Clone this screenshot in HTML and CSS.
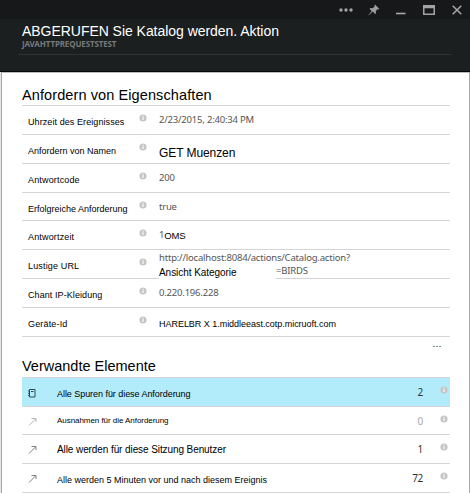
FILE: index.html
```html
<!DOCTYPE html>
<html lang="de">
<head>
<meta charset="utf-8">
<title>ABGERUFEN Sie Katalog werden. Aktion</title>
<link rel="stylesheet" href="styles.css">
</head>
<body>
<svg class="defs" width="0" height="0">
  <symbol id="info" viewBox="0 0 8 8"><circle cx="4" cy="4" r="3.6" fill="#c6c6c6"/><path d="M4 3.300v2.700M4 1.700v1" stroke="#fff" stroke-width="1.100" fill="none"/></symbol>
  <symbol id="arrow" viewBox="0 0 10 10"><path d="M1 8.500L7.500 2M3.500 1.500h4.500v3.500" fill="none" stroke="currentColor" stroke-width="1"/></symbol>
</svg>
<div class="blade">
  <header class="head">
    <div class="bar">
      <svg width="14" height="4" viewBox="0 0 14 4" class="dots"><g fill="#a2a3a4"><circle cx="2" cy="2" r="1.7"/><circle cx="7" cy="2" r="1.7"/><circle cx="12" cy="2" r="1.7"/></g></svg>
      <svg width="12" height="12" viewBox="0 0 12 12" class="pin"><path d="M7 .6L11.4 5l-1 .5-.9-.2-1.7 1.8.2 2.2-.9.7-2.3-2.4L.8 11.2l-.3-.2 3.2-4L1.6 4.900l.8-.8 2.300.2L6.600 2.500l-.2-1z" fill="#9c9d9e"/></svg>
      <svg width="10" height="12" viewBox="0 0 10 12" class="min"><path d="M0 10.500h9.500" stroke="#a8a9aa" stroke-width="1.600"/></svg>
      <svg width="12" height="10" viewBox="0 0 12 10" class="max"><path d="M0 0h12v10H0zM1.500 3.300v5.200h9V3.300z" fill="#a2a3a4" fill-rule="evenodd"/></svg>
      <svg width="10" height="10" viewBox="0 0 10 10" class="close"><path d="M.7.7l8.600 8.600M9.300.7L.7 9.300" stroke="#a6a7a8" stroke-width="1.500"/></svg>
    </div>
    <div class="titles">
      <h1>ABGERUFEN Sie Katalog werden. Aktion</h1>
      <p>JAVAHTTPREQUESTSTEST</p>
    </div>
  </header>
  <main>
    <h2 class="props-title">Anfordern von Eigenschaften</h2>
    <div class="rows">
      <div class="row"><span class="label l-time">Uhrzeit des Ereignisses</span><svg class="info"><use href="#info"/></svg><span class="value date">2/23/2015, 2:40:34 PM</span></div>
      <div class="row"><span class="label">Anfordern von Namen</span><svg class="info"><use href="#info"/></svg><span class="value name">GET Muenzen</span></div>
      <div class="row"><span class="label l-wide">Antwortcode</span><svg class="info"><use href="#info"/></svg><span class="value code">200</span></div>
      <div class="row"><span class="label">Erfolgreiche Anforderung</span><svg class="info"><use href="#info"/></svg><span class="value">true</span></div>
      <div class="row"><span class="label l-wide">Antwortzeit</span><svg class="info"><use href="#info"/></svg><span class="value time">1<span class="ms">OMS</span></span></div>
      <div class="row"><span class="label l-wide">Lustige URL</span><svg class="info"><use href="#info"/></svg><span class="value url">http://localhost:8084/actions/Catalog.action?<span class="query"><span class="cat">Ansicht Kategorie</span><span class="birds">=BIRDS</span></span></span></div>
      <div class="row"><span class="label l-time">Chant IP-Kleidung</span><svg class="info"><use href="#info"/></svg><span class="value ip">0.220.196.228</span></div>
      <div class="row"><span class="label l-wide">Geräte-Id</span><svg class="info"><use href="#info"/></svg><span class="value host">HARELBR X 1.middleeast.cotp.micruoft.com</span></div>
    </div>
    <div class="more"><i></i><i></i><i></i></div>
    <h2 class="rel-title">Verwandte Elemente</h2>
    <div class="rows related">
      <div class="row active"><svg class="lead book" viewBox="0 0 8 10"><path d="M1.500 1.500h5.500v7.500h-5.500zM0 3h1.500M0 5.200h1.500M0 7.500h1.500M3 3.500h2.500" fill="none" stroke="#2c4a55"/></svg><span class="item">Alle Spuren für diese Anforderung</span><span class="count">2</span><svg class="info"><use href="#info"/></svg></div>
      <div class="row"><svg class="lead faint"><use href="#arrow"/></svg><span class="item small">Ausnahmen für die Anforderung</span><span class="count zero">0</span><svg class="info"><use href="#info"/></svg></div>
      <div class="row"><svg class="lead"><use href="#arrow"/></svg><span class="item large">Alle werden für diese Sitzung Benutzer</span><span class="count">1</span><svg class="info"><use href="#info"/></svg></div>
      <div class="row"><svg class="lead"><use href="#arrow"/></svg><span class="item last">Alle werden 5 Minuten vor und nach diesem Ereignis</span><span class="count">72</span><svg class="info"><use href="#info"/></svg></div>
    </div>
  </main>
</div>
</body>
</html>
```
FILE: styles.css
```css
* { box-sizing: border-box; }
body { margin: 0; background: #fff; font-family: "Liberation Sans", Arial, sans-serif; color: #000; overflow: hidden; }
h1, h2, p { margin: 0; font-weight: 400; }
.defs { position: absolute; }
svg { display: block; flex: none; }

.blade { height: 493px; overflow: hidden; display: flex; flex-direction: column; }
.head { height: 72px; flex: none; background: #1c1f20; border-bottom: 1px solid #08090a; }
.bar { height: 19px; background: #17181a; display: flex; align-items: flex-start; padding-left: 339px; }
.dots { margin-top: 8px; }
.pin { margin: 4px 0 0 15px; }
.min { margin: 3px 0 0 16px; }
.max { margin: 5px 0 0 17px; }
.close { margin: 5px 0 0 17px; }
.titles { margin: 0 18px; height: 36px; border-bottom: 1px solid #303334; padding: 4px 0 0 4px; }
h1 { font-size: 14px; line-height: 17px; letter-spacing: -0.04px; color: #fff; white-space: nowrap; }
.titles p { font: 700 8px/9px "Noto Sans", sans-serif; letter-spacing: -0.13px; color: #75787a; margin-top: -1px; }

main { flex: 1; border-left: 1px solid #e4e4e4; border-right: 1px solid #a6a6a6; box-shadow: inset 1px 0 #a6a6a6, inset 0 1px #bdbdbd; padding: 14px 19px 0 21px; }
h2 { font-size: 14.5px; line-height: 19px; white-space: nowrap; border-bottom: 1px solid #d4d4d4; }
.props-title { height: 20px; letter-spacing: 0.1px; }
.rel-title { height: 21px; line-height: 18px; }
.row { display: flex; align-items: flex-start; height: 28.85px; border-bottom: 1px solid #d4d4d4; padding-left: 6px; white-space: nowrap; }
.label { width: 111px; padding-top: 10px; font-size: 9px; line-height: 12px; }
.l-time { letter-spacing: 0.08px; }
.l-wide { letter-spacing: 0.16px; }
.info { width: 8px; height: 8px; margin-top: 8px; }
.value { margin-left: 12px; padding-top: 7px; font: 9.5px/13px "Noto Sans", sans-serif; letter-spacing: -0.2px; color: #555; }
.name { padding-top: 11px; font: 12px/14px "Liberation Sans", sans-serif; letter-spacing: -0.08px; color: #000; }
.time { display: flex; }
.ms { font: 9.5px/12px "Liberation Sans", sans-serif; color: #000; padding-top: 2px; }
.url { padding: 1px 0 0; height: 28px; }
.query { display: flex; align-items: flex-start; width: 117px; height: 16px; justify-content: space-between; background: #fff; }
.cat { font: 10px/14px "Liberation Sans", sans-serif; letter-spacing: -0.05px; color: #000; padding-top: 2px; }
.birds { width: 0; }
.host { padding-top: 10px; font: 9px/12px "Liberation Sans", sans-serif; letter-spacing: -0.03px; color: #000; }

.more { height: 20px; display: flex; justify-content: flex-end; gap: 1px; padding: 9px 9px 0 0; }
.more i { width: 2px; height: 1px; background: #6f8f96; }

.lead { width: 10px; height: 10px; margin-top: 10px; color: #808080; }
.book { width: 8px; margin-right: 2px; }
.faint { color: #b5b5b5; }
.item { flex: 1; padding: 10px 0 0 19px; font-size: 9px; line-height: 12px; letter-spacing: -0.05px; }
.small { font-size: 8px; padding-top: 8px; }
.large { font-size: 10px; letter-spacing: -0.09px; padding-top: 9px; }
.last { letter-spacing: 0; }
.count { padding-top: 7px; margin-right: 17px; font: 10px/14px "Noto Sans", sans-serif; letter-spacing: -0.3px; color: #333; }
.zero { color: #aaa; }
.related .info { margin-right: 2px; }
.active { background: #b2ebf9; }
```
